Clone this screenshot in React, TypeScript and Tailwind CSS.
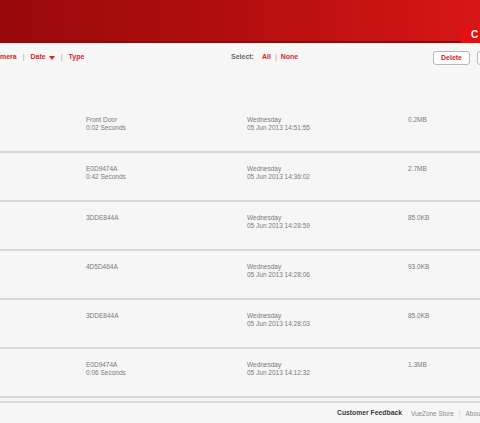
import React from 'react';

interface Clip {
  name: string;
  duration?: string;
  day: string;
  stamp: string;
  size: string;
}

const CLIPS: Clip[] = [
  { name: 'Front Door', duration: '0:02 Seconds', day: 'Wednesday', stamp: '05 Jun 2013 14:51:55', size: '0.2MB' },
  { name: 'E0D9474A', duration: '0:42 Seconds', day: 'Wednesday', stamp: '05 Jun 2013 14:36:02', size: '2.7MB' },
  { name: '3DDE844A', day: 'Wednesday', stamp: '05 Jun 2013 14:28:59', size: '85.0KB' },
  { name: '4D5D464A', day: 'Wednesday', stamp: '05 Jun 2013 14:28:06', size: '93.0KB' },
  { name: '3DDE844A', day: 'Wednesday', stamp: '05 Jun 2013 14:28:03', size: '85.0KB' },
  { name: 'E0D9474A', duration: '0:06 Seconds', day: 'Wednesday', stamp: '05 Jun 2013 14:12:32', size: '1.3MB' },
];

const Sep = () => <span className="text-[#a0a0a0] font-normal">|</span>;

export default function App() {
  return (
    <div className="relative w-[480px] h-[423px] overflow-hidden bg-[#f6f6f6] font-['Liberation_Sans',Arial,sans-serif]">
      {/* red header */}
      <div className="relative h-[43px] bg-gradient-to-r from-[#980909] via-[#b40e0e] to-[#d81616] border-b-2 border-[#8e0b0b]">
        <div className="absolute right-0 top-[27px] h-[16px] w-[19px] rounded-tl-[2px] bg-[#e80f0f] pl-[10px] text-[10px] font-bold leading-[16px] text-white">
          C
        </div>
      </div>

      {/* toolbar */}
      <div className="h-[61px] border-t border-[#e8e8e8] bg-[#f7f7f7]">
        <div className="flex h-[26px] items-center pt-[1px] text-[7px] font-bold">
          <div className="-ml-[9px] flex w-[240px] items-center gap-[6px] text-[#d82626]">
            <span>Camera</span>
            <Sep />
            <span className="flex items-center gap-[3px]">
              Date
              <svg width="6" height="4" viewBox="0 0 6 4">
                <path d="M0 0h6L3 4z" fill="#d82626" />
              </svg>
            </span>
            <Sep />
            <span>Type</span>
          </div>
          <div className="flex items-center gap-[4px]">
            <span className="mr-[4px] text-[#6a6a6a]">Select:</span>
            <span className="text-[#d82626]">All</span>
            <Sep />
            <span className="text-[#d82626]">None</span>
          </div>
          <div className="ml-auto -mr-[10px] flex items-center gap-[7px] pt-[1px]">
            <button className="h-[14px] w-[37px] rounded-[3px] border border-[#b8b8b8] bg-white text-[7px] font-bold leading-[12px] text-[#d82626]">
              Delete
            </button>
            <div className="h-[14px] w-[13px] rounded-[3px] border border-[#b8b8b8] bg-white" />
          </div>
        </div>
      </div>

      {/* clip rows */}
      <div className="flex flex-col">
        {CLIPS.map((clip, i) => (
          <div
            key={i}
            className="grid h-[49px] grid-cols-[161px_161px_1fr] border-b-2 border-[#d8d8d8] pl-[86px] pt-[12px] text-[6.5px] leading-[8px] text-[#7a7a7a]"
          >
            <div>
              <div>{clip.name}</div>
              {clip.duration && <div>{clip.duration}</div>}
            </div>
            <div>
              <div>{clip.day}</div>
              <div>{clip.stamp}</div>
            </div>
            <div>{clip.size}</div>
          </div>
        ))}
      </div>

      {/* footer */}
      <div className="mt-[3px] flex h-[23px] items-center whitespace-nowrap border-t-2 border-[#dcdcdc] pl-[337px] text-[6.8px]">
        <span className="font-bold text-[#3a3a3a]">Customer Feedback</span>
        <span className="ml-[9px] text-[6.4px] text-[#8a8a8a]">VueZone Store</span>
        <span className="ml-[5px] text-[#cfcfcf]">|</span>
        <span className="ml-[5px] text-[6.4px] text-[#8a8a8a]">About</span>
      </div>
    </div>
  );
}
